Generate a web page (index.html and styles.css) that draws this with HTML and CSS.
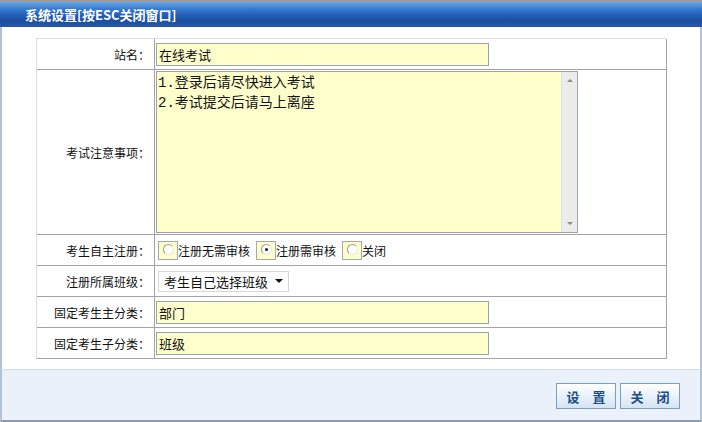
FILE: index.html
```html
<!DOCTYPE html>
<html>
<head>
	<meta charset="utf-8">
	<title>系统设置</title>
	<link rel="stylesheet" href="styles.css">
</head>
<body>
	<div class="dlg">
		<div class="dlg-title">系统设置[按ESC关闭窗口]</div>
		<div class="dlg-body">
			<div class="form">
				<div class="lbl">站名：</div>
				<div class="val"><input class="txt" type="text" value="在线考试"></div>

				<div class="lbl">考试注意事项：</div>
				<div class="val val-top">
					<div class="area">
						<textarea>1.登录后请尽快进入考试
2.考试提交后请马上离座</textarea>
						<div class="sbar"><span class="up"></span><span class="down"></span></div>
					</div>
				</div>

				<div class="lbl">考生自主注册：</div>
				<div class="val">
					<label class="opt"><span class="rb"><span class="dot"></span></span>注册无需审核</label>
					<label class="opt"><span class="rb"><span class="dot on"></span></span>注册需审核</label>
					<label class="opt"><span class="rb"><span class="dot"></span></span>关闭</label>
				</div>

				<div class="lbl">注册所属班级：</div>
				<div class="val">
					<div class="sel">考生自己选择班级<span class="arr"></span></div>
				</div>

				<div class="lbl">固定考生主分类：</div>
				<div class="val"><input class="txt" type="text" value="部门"></div>

				<div class="lbl">固定考生子分类：</div>
				<div class="val"><input class="txt" type="text" value="班级"></div>
			</div>
		</div>
		<div class="dlg-foot">
			<button class="btn">设 置</button>
			<button class="btn">关 闭</button>
		</div>
	</div>
</body>
</html>
```

FILE: styles.css
```css
*{
    margin: 0;
    padding: 0;
    box-sizing: border-box;
}
html,body{
    width: 702px;
    height: 422px;
    background: #fff;
    overflow: hidden;
    font: 12px "Noto Sans CJK SC", sans-serif;
    color: #111;
}
.dlg{
    width: 702px;
    height: 422px;
    display: flex;
    flex-direction: column;
}
.dlg-title{
    height: 27px;
    border-top: 2px solid #9c9c9c;
    padding-left: 25px;
    color: #fff;
    font-weight: bold;
    font-size: 13px;
    line-height: 25px;
    background: linear-gradient(#69a6e6 0, #3b7fd0 25%, #2560b8 50%, #1d4fa2 75%, #2458a4 100%);
}
.dlg-body{
    border-left: 2px solid #b3c1d1;
    border-right: 2px solid #b3c1d1;
    padding: 11px 34px 10px 34px;
}
.form{
    display: grid;
    grid-template-columns: 118px 512px;
    grid-template-rows: 31px 165px 31px 31px 31px 31px;
    border-top: 1px solid #dcdcdc;
    border-left: 1px solid #dcdcdc;
}
.lbl, .val{
    border-right: 1px solid #a3a3a3;
    border-bottom: 1px solid #a3a3a3;
    display: flex;
    align-items: center;
}
.lbl{
    justify-content: flex-end;
    padding-right: 4px;
}
.val{
    padding-left: 1px;
}
.val-top{
    align-items: flex-start;
    padding-top: 1px;
}
.txt{
    width: 333px;
    height: 23px;
    border: 1px solid #9aa3ab;
    background: #ffffcc;
    padding: 0 2px;
    font: 13px "Noto Sans CJK SC", sans-serif;
    color: #111;
    outline: none;
}
.area{
    width: 422px;
    height: 162px;
    border: 1px solid #9aa3ab;
    display: flex;
    background: #ffffcc;
}
.area textarea{
    flex: 1;
    border: 0;
    resize: none;
    outline: none;
    background: transparent;
    padding: 1px 1px;
    font: 14px/20px "Liberation Mono", "Noto Sans CJK SC", monospace;
    color: #111;
    overflow: hidden;
}
/* fake scrollbar beside the textarea */
.sbar{
    width: 16px;
    background: #ececec;
    border-left: 1px solid #e2e2e2;
    display: flex;
    flex-direction: column;
    justify-content: space-between;
    align-items: center;
    padding: 7px 0;
}
.sbar span{
    width: 0;
    height: 0;
    border-left: 3px solid transparent;
    border-right: 3px solid transparent;
}
.sbar .up{
    border-bottom: 3px solid #8a8a8a;
}
.sbar .down{
    border-top: 3px solid #8a8a8a;
}
.opt{
    display: flex;
    align-items: center;
    margin-right: 6px;
}
.opt:first-child{
    margin-left: 2px;
}
.rb{
    width: 20px;
    height: 19px;
    border: 1px solid #a3a9ae;
    background: #ffffcc;
    padding: 2px 0 0 4px;
}
.dot{
    display: block;
    width: 11px;
    height: 11px;
    border-radius: 50%;
    border: 1px solid #9a9a9a;
    border-right-color: #e8e8e8;
    border-bottom-color: #e8e8e8;
    background: #fff;
    position: relative;
}
.dot.on::after{
    content: "";
    position: absolute;
    left: 3px;
    top: 3px;
    width: 3px;
    height: 3px;
    border-radius: 50%;
    background: #111;
}
.sel{
    margin-left: 2px;
    width: 131px;
    height: 21px;
    border: 1px solid #d6d6d6;
    background: #fff;
    font-size: 13px;
    padding-left: 5px;
    display: flex;
    align-items: center;
    justify-content: space-between;
}
.arr{
    width: 0;
    height: 0;
    margin-right: 5px;
    border-left: 4px solid transparent;
    border-right: 4px solid transparent;
    border-top: 4px solid #111;
}
.dlg-foot{
    flex: 1;
    border: 2px solid #b3c1d1;
    border-top: 1px solid #d2dde9;
    border-bottom: 2px solid #8a9bb0;
    background: #eaf1fb;
    display: flex;
    justify-content: flex-end;
    align-items: flex-start;
    gap: 4px;
    padding: 13px 20px 0 0;
}
.btn{
    width: 60px;
    height: 26px;
    border: 1px solid #7f9dbd;
    background: linear-gradient(#ffffff, #e9f2fb 50%, #d4e4f5);
    color: #1d4d88;
    font: bold 13px "Noto Sans CJK SC", sans-serif;
    letter-spacing: 5px;
    padding-left: 5px;
    cursor: pointer;
}
```
